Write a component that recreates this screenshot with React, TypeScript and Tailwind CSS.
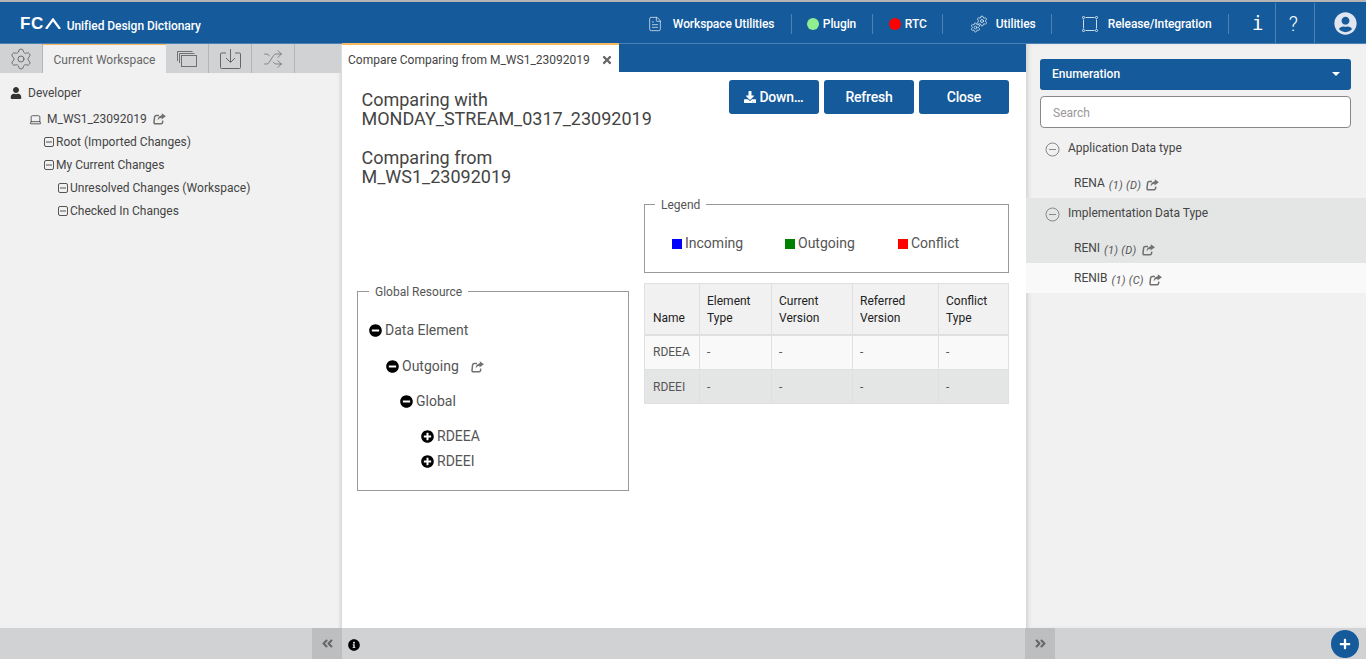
import React from "react";
import { FileText, Laptop, Settings, Shuffle } from "lucide-react";
import {
  FaAngleDoubleLeft,
  FaAngleDoubleRight,
  FaDownload,
  FaInfoCircle,
  FaMinusCircle,
  FaPlus,
  FaPlusCircle,
  FaTimes,
  FaUser,
  FaUserCircle,
} from "react-icons/fa";

const BLUE = "bg-[#155a9b]";

const MinusBox = () => (
  <svg width="10" height="10" viewBox="0 0 10 10" className="mr-[2px] shrink-0">
    <rect x="0.5" y="0.5" width="9" height="9" rx="1.5" fill="none" stroke="#555" />
    <path d="M2 5h6" stroke="#555" />
  </svg>
);

const Share = ({ className = "" }: { className?: string }) => (
  <svg width="13" height="12" viewBox="0 0 13 12" className={`shrink-0 ${className}`}>
    <path d="M6 2.5H3.2Q1.9 2.5 1.6 3.8L1 9.4Q0.9 10.7 2.2 10.7H8.2Q9.3 10.7 9.5 9.6L9.8 7.6" fill="none" stroke="#707070" strokeWidth="1.5" />
    <path d="M8.8 0.3L12.9 3.2 8.4 6.6 8.6 4.7Q5.8 4.6 4.7 7.4 4.6 3 8.8 2.2Z" fill="#707070" />
  </svg>
);

const Sep = ({ className = "" }: { className?: string }) => (
  <div className={`w-px h-[20px] bg-[#4d80b3] shrink-0 ${className}`} />
);

const Cogs = () => (
  <div className="relative w-[18px] h-[18px] ml-[27px] shrink-0">
    <Settings size={12} strokeWidth={1.4} className="absolute right-0 top-0" />
    <Settings size={11} strokeWidth={1.4} className="absolute left-0 bottom-0" />
  </div>
);

const Release = () => (
  <svg width="16" height="16" viewBox="0 0 16 16" className="ml-[30px] shrink-0" fill="none" stroke="white" strokeWidth="0.8">
    <path d="M3.5 1.5h9M3.5 14.5h9M1.5 3.5v9M14.5 3.5v9" />
    <circle cx="1.5" cy="1.5" r="1.1" />
    <circle cx="14.5" cy="1.5" r="1.1" />
    <circle cx="1.5" cy="14.5" r="1.1" />
    <circle cx="14.5" cy="14.5" r="1.1" />
  </svg>
);

const navText = "text-[12px] font-medium tracking-[-0.1px] whitespace-nowrap";

const Header = () => (
  <header className={`h-[44px] shrink-0 pt-[2px] ${BLUE} border-t-2 border-t-[#b5b5b5] border-b border-b-[#4d80b3] flex items-center text-white`}>
    <div className="flex items-center ml-[20px]">
      <span className="text-[17px] font-bold leading-none tracking-[0.5px] font-['Liberation_Sans',sans-serif]">FC</span>
      <svg width="16" height="11" viewBox="0 0 16 11" className="ml-[1px]">
        <path d="M1 11L8 1.5 15 11" fill="none" stroke="white" strokeWidth="2.2" />
      </svg>
      <span className="ml-[6px] text-[12px] font-medium mt-[4px] tracking-[-0.05px]">Unified Design Dictionary</span>
    </div>
    <FileText size={16} strokeWidth={1} className="ml-[446px] shrink-0" />
    <span className={`ml-[10px] w-[103px] ${navText}`}>Workspace Utilities</span>
    <Sep className="ml-[15px]" />
    <span className="ml-[15px] w-[12px] h-[12px] rounded-full bg-[#90ee90] shrink-0" />
    <span className={`ml-[4px] w-[35px] ${navText}`}>Plugin</span>
    <Sep className="ml-[14px]" />
    <span className="ml-[16px] w-[12px] h-[12px] rounded-full bg-[#ff0000] shrink-0" />
    <span className={`ml-[4px] w-[23px] ${navText}`}>RTC</span>
    <Sep className="ml-[14px]" />
    <Cogs />
    <span className={`ml-[8px] w-[42px] ${navText}`}>Utilities</span>
    <Sep className="ml-[13px]" />
    <Release />
    <span className={`ml-[10px] w-[106px] ${navText}`}>Release/Integration</span>
    <Sep className="ml-[14px]" />
    <div className="ml-[8px] w-[39px] -my-[2px] h-[41px] flex items-center justify-center font-['DejaVu_Sans_Mono',monospace] border-r border-r-[#4d80b3]">
      <span className="text-[19px] pl-[4px]">i</span>
    </div>
    <div className="w-[39px] -my-[2px] h-[41px] flex items-center justify-center text-[20px] font-light pr-[3px] border-r border-r-[#4d80b3]">?</div>
    <FaUserCircle size={23} className="ml-[19px] text-[#dfe6ef] shrink-0" />
  </header>
);

const LeftPanel = () => (
  <aside className="w-[342px] shrink-0 bg-[#f1f1f1] flex flex-col border-r border-r-[#dcdcdc] shadow-[inset_-3px_0_3px_-2px_#d4d4d4]">
    <div className="h-[29px] bg-[#d1d2d3] flex items-stretch shrink-0">
      <div className="w-[43px] flex items-center justify-center border-r border-r-[#b5b5b5]">
        <Settings size={24} strokeWidth={0.8} className="text-[#555]" />
      </div>
      <div className="w-[123px] pt-[2px] bg-[#f1f1f1] border-t border-t-[#f5b960] flex items-center justify-center text-[12px] text-[#666]">
        Current Workspace
      </div>
      <div className="w-[43px] flex items-center justify-center border-r border-r-[#b5b5b5]">
        <svg width="20" height="17" viewBox="0 0 20 17" fill="none" stroke="#666" strokeWidth="0.9">
          <path d="M0.5 11V1.5h15" />
          <path d="M2.5 13V3.5h15" />
          <rect x="4.5" y="5.5" width="15" height="11" />
        </svg>
      </div>
      <div className="w-[43px] flex items-center justify-center border-r border-r-[#b5b5b5]">
        <svg width="21" height="21" viewBox="0 0 21 21" fill="none" stroke="#666" strokeWidth="1">
          <path d="M6 5H1.5a1 1 0 0 0-1 1v13.5a1 1 0 0 0 1 1h18a1 1 0 0 0 1-1V6a1 1 0 0 0-1-1H15" />
          <path d="M10.5 1v13M6 10l4.5 4.5L15 10" />
        </svg>
      </div>
      <div className="w-[43px] flex items-center justify-center border-r border-r-[#b5b5b5]">
        <Shuffle size={20} strokeWidth={0.9} className="text-[#666]" />
      </div>
    </div>
    <div className="text-[12px] text-[#444] pt-[12px]">
      <div className="h-[16px] flex items-center pl-[10px]">
        <FaUser size={12} className="text-[#333] mr-[6px]" />
        Developer
      </div>
      <div className="h-[16px] mt-[10px] flex items-center pl-[29px]">
        <Laptop size={13} strokeWidth={1.4} className="text-[#333] mr-[5px]" />
        M_WS1_23092019
        <Share className="ml-[6px]" />
      </div>
      <div className="h-[16px] mt-[7px] flex items-center pl-[44px]"><MinusBox />Root (Imported Changes)</div>
      <div className="h-[16px] mt-[7px] flex items-center pl-[44px]"><MinusBox />My Current Changes</div>
      <div className="h-[16px] mt-[7px] flex items-center pl-[58px]"><MinusBox />Unresolved Changes (Workspace)</div>
      <div className="h-[16px] mt-[7px] flex items-center pl-[58px]"><MinusBox />Checked In Changes</div>
    </div>
  </aside>
);

const TreeRow = ({ open, label, className, share }: { open: boolean; label: string; className: string; share?: boolean }) => (
  <div className={`flex items-center text-[14px] text-[#555] ${className}`}>
    {open ? <FaMinusCircle size={13} className="text-black mr-[3px]" /> : <FaPlusCircle size={13} className="text-black mr-[3px]" />}
    {label}
    {share && <Share className="ml-[12px]" />}
  </div>
);

const LegendItem = ({ color, label, className }: { color: string; label: string; className: string }) => (
  <div className={`flex items-center ${className}`}>
    <span className={`w-[10px] h-[10px] ${color} mr-[3px]`} />
    {label}
  </div>
);

const thBase = "border border-[#e0e0e0] border-b-2 pr-2 pb-[7px] align-bottom text-left font-normal text-[12px] leading-[17px] text-[#222]";
const th = `${thBase} pl-[7px]`;
const tdBase = "border border-[#e0e0e0] pr-2 text-[12px] text-[#555]";
const td = `${tdBase} pl-[7px]`;

const CenterPanel = () => (
  <main className="flex-1 min-w-0 bg-white flex flex-col">
    <div className={`h-[28px] shrink-0 ${BLUE} flex`}>
      <div className="w-[277px] pt-[2px] bg-white border-t-2 border-t-[#f5b960] flex items-center pl-[6px] text-[12px] text-[#444] -mt-px h-[29px]">
        Compare Comparing from M_WS1_23092019
        <FaTimes size={12} className="text-[#666] ml-[11px]" />
      </div>
    </div>
    <div className="flex pl-[15px] pr-[17px]">
      <div className="w-[272px] shrink-0 pt-[18px]">
        <h2 className="pl-[4.5px] text-[18px] leading-[19px] text-[#444] whitespace-nowrap">
          Comparing with<br />MONDAY_STREAM_0317_23092019
        </h2>
        <h2 className="pl-[4.5px] mt-[20px] text-[18px] leading-[19px] text-[#444] whitespace-nowrap">
          Comparing from<br />M_WS1_23092019
        </h2>
        <fieldset className="mt-[95px] h-[210px] border border-[#999] pl-[11px] pt-[19px]">
          <legend className="px-[6px] pt-[2px] text-[12px] text-[#555]">Global Resource</legend>
          <TreeRow open label="Data Element" className="" />
          <TreeRow open share label="Outgoing" className="ml-[17px] mt-[15px]" />
          <TreeRow open label="Global" className="ml-[31px] mt-[14px]" />
          <TreeRow open={false} label="RDEEA" className="ml-[52px] mt-[14px]" />
          <TreeRow open={false} label="RDEEI" className="ml-[52px] mt-[4px]" />
        </fieldset>
      </div>
      <div className="ml-[15px] flex-1 min-w-0 pt-[8px]">
        <div className="flex justify-end gap-[5px]">
          {["Down…", "Refresh", "Close"].map((label, i) => (
            <button
              key={label}
              className={`w-[90px] h-[34px] rounded-[3px] ${BLUE} text-white text-[14px] font-medium tracking-[-0.2px] flex items-center justify-center`}
            >
              {i === 0 && <FaDownload size={12} className="mr-[3px]" />}
              {label}
            </button>
          ))}
        </div>
        <fieldset className="mt-[80px] h-[79px] border border-[#999]">
          <legend className="px-[6px] pt-[2px] ml-[10px] text-[12px] text-[#555]">Legend</legend>
          <div className="flex text-[14px] text-[#555] pt-[19px] pl-[27px]">
            <LegendItem color="bg-[#0000ff]" label="Incoming" className="w-[113px]" />
            <LegendItem color="bg-[#008000]" label="Outgoing" className="w-[113px]" />
            <LegendItem color="bg-[#ff0000]" label="Conflict" className="" />
          </div>
        </fieldset>
        <table className="mt-[10px] w-full border-collapse table-fixed">
          <colgroup>
            <col className="w-[55px]" />
            <col className="w-[72px]" />
            <col className="w-[81px]" />
            <col className="w-[86px]" />
            <col />
          </colgroup>
          <thead>
            <tr className="h-[51px] bg-[#f1f1f1]">
              <th className={`${thBase} pl-[8px]`}>Name</th>
              <th className={th}>Element<br />Type</th>
              <th className={th}>Current<br />Version</th>
              <th className={th}>Referred<br />Version</th>
              <th className={th}>Conflict<br />Type</th>
            </tr>
          </thead>
          <tbody>
            <tr className="h-[35px] bg-[#f9f9f9]">
              <td className={`${tdBase} pl-[8px]`}>RDEEA</td><td className={td}>-</td><td className={td}>-</td><td className={td}>-</td><td className={td}>-</td>
            </tr>
            <tr className="h-[34px] bg-[#e4e6e5]">
              <td className={`${tdBase} pl-[8px]`}>RDEEI</td><td className={td}>-</td><td className={td}>-</td><td className={td}>-</td><td className={td}>-</td>
            </tr>
          </tbody>
        </table>
      </div>
    </div>
  </main>
);

const CircleMinus = () => (
  <svg width="15" height="15" viewBox="0 0 15 15" className="shrink-0" fill="none" stroke="#888">
    <circle cx="7.5" cy="7.5" r="6.5" />
    <path d="M4 7.5h7" />
  </svg>
);

const Item = ({ name, meta, className = "" }: { name: string; meta: string; className?: string }) => (
  <div className={`flex items-start pl-[48px] text-[12px] text-[#444] ${className}`}>
    {name}
    <i className="ml-[4px] mt-[4px] text-[11px] text-[#555] tracking-[0.3px]">{meta}</i>
    <Share className="ml-[5px] mt-[5px]" />
  </div>
);

const RightPanel = () => (
  <aside className="w-[340px] shrink-0 bg-[#f1f1f1] flex flex-col shadow-[inset_4px_0_4px_-2px_#d0d0d0]">
    <div className="pl-[14px] pr-[15px] pt-[15px]">
      <div className={`h-[31px] rounded-[3px] ${BLUE} text-white text-[12px] font-medium pb-[2px] flex items-center justify-between pl-[12px] pr-[11px]`}>
        Enumeration
        <span className="w-0 h-0 border-x-[4px] border-x-transparent border-t-[4px] border-t-white" />
      </div>
      <div className="mt-[6px] h-[32px] rounded-[4px] border border-[#888] bg-white flex items-center pl-[12px] pt-[1px] text-[12px] text-[#999]">
        Search
      </div>
    </div>
    <div className="h-[70px] pt-[13px] text-[12px] text-[#444]">
      <div className="flex items-center pl-[19px]"><CircleMinus /><span className="ml-[8px] -mt-[2px]">Application Data type</span></div>
      <Item name="RENA" meta="(1) (D)" className="mt-[17px]" />
    </div>
    <div className="h-[65px] bg-[#e4e6e5] pt-[8px] text-[12px] text-[#444]">
      <div className="flex items-center pl-[19px]"><CircleMinus /><span className="ml-[8px] -mt-[2px]">Implementation Data Type</span></div>
      <Item name="RENI" meta="(1) (D)" className="mt-[17px]" />
    </div>
    <Item name="RENIB" meta="(1) (C)" className="h-[30px] pt-[6px] bg-[#f9f9f9]" />
  </aside>
);

const Footer = () => (
  <footer className="h-[31px] shrink-0 bg-[#d1d2d3] flex items-center">
    <div className="ml-[312px] w-[30px] h-full bg-[#bdbebf] flex items-center justify-center text-[#666]">
      <FaAngleDoubleLeft size={13} />
    </div>
    <FaInfoCircle size={12} className="ml-[6px] mt-[2px] text-black" />
    <div className="ml-[665px] w-[30px] h-full bg-[#bdbebf] flex items-center justify-center text-[#666]">
      <FaAngleDoubleRight size={13} />
    </div>
    <div className={`ml-auto mr-[7px] w-[28px] h-[28px] rounded-full ${BLUE} flex items-center justify-center text-white`}>
      <FaPlus size={12} />
    </div>
  </footer>
);

export default function App() {
  return (
    <div className="h-[659px] w-[1366px] overflow-hidden flex flex-col font-['Roboto',sans-serif]">
      <Header />
      <div className="flex-1 min-h-0 flex">
        <LeftPanel />
        <CenterPanel />
        <RightPanel />
      </div>
      <Footer />
    </div>
  );
}
